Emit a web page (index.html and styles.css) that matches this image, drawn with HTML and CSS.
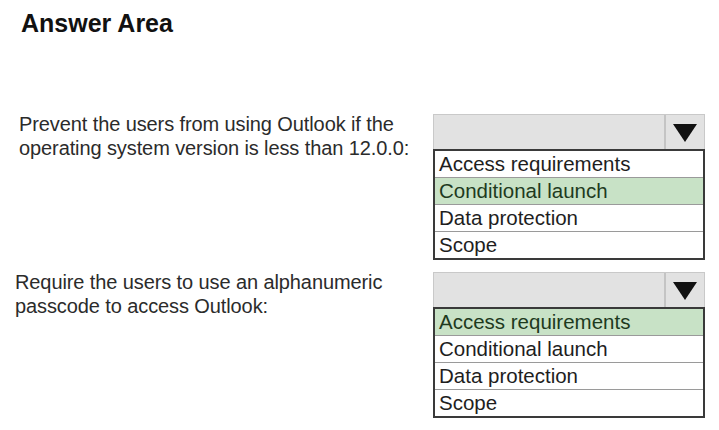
FILE: index.html
```html
<!DOCTYPE html>
<html lang="en">
<head>
    <meta charset="UTF-8">
    <title>Answer Area</title>
    <link rel="stylesheet" href="styles.css">
</head>
<body>
    <div class="answer-area">
        <h1>Answer Area</h1>

        <div class="question first">
            <p class="prompt">Prevent the users from using Outlook if the<br>operating system version is less than 12.0.0:</p>
            <div class="dropdown">
                <div class="dropdown-head">
                    <span class="dropdown-value"></span>
                    <span class="dropdown-arrow"><svg width="24" height="18" viewBox="0 0 24 18"><path d="M0 0 H24 L12 18 Z" fill="#111"/></svg></span>
                </div>
                <ul class="options">
                    <li>Access requirements</li>
                    <li class="picked">Conditional launch</li>
                    <li>Data protection</li>
                    <li>Scope</li>
                </ul>
            </div>
        </div>

        <div class="question second">
            <p class="prompt">Require the users to use an alphanumeric<br>passcode to access Outlook:</p>
            <div class="dropdown">
                <div class="dropdown-head">
                    <span class="dropdown-value"></span>
                    <span class="dropdown-arrow"><svg width="24" height="18" viewBox="0 0 24 18"><path d="M0 0 H24 L12 18 Z" fill="#111"/></svg></span>
                </div>
                <ul class="options">
                    <li class="picked">Access requirements</li>
                    <li>Conditional launch</li>
                    <li>Data protection</li>
                    <li>Scope</li>
                </ul>
            </div>
        </div>
    </div>
</body>
</html>
```
FILE: styles.css
```css
body {
    margin: 0;
    background: #fff;
    font-family: "Liberation Sans", Arial, sans-serif;
    color: #2a2a2a;
}
.answer-area {
    padding: 8px 0 0 0;
}
h1 {
    margin: 0 0 0 21px;
    font-size: 25px;
    line-height: 30px;
    font-weight: bold;
    color: #111;
}
.question {
    display: flex;
    align-items: flex-start;
}
.question.first {
    margin-top: 76px;
}
.question.second {
    margin-top: 12px;
}
.prompt {
    margin: 0;
    width: 414px;
    font-size: 20px;
    line-height: 24px;
    letter-spacing: -0.1px;
    color: #2b2b2b;
    white-space: nowrap;
}
.question.first .prompt {
    padding-left: 19px;
    margin-top: -2px;
}
.question.second .prompt {
    padding-left: 15px;
    width: 418px;
    margin-top: -2px;
}
.dropdown {
    width: 272px;
}
.dropdown-head {
    display: flex;
    height: 34px;
    background: #e2e2e2;
    border: 1px solid #c9c9c9;
    border-bottom: none;
}
.dropdown-value {
    flex: 1;
    border-right: 2px solid #c4c4c4;
}
.dropdown-arrow {
    width: 38px;
    display: flex;
    justify-content: center;
    align-items: center;
    padding-top: 2px;
}
.options {
    list-style: none;
    margin: 0;
    padding: 0;
    border: 2px solid #3a3a3a;
}
.options li {
    height: 26px;
    line-height: 26px;
    padding-left: 4px;
    font-size: 20.5px;
    color: #1e1e1e;
    border-top: 1px solid #9a9a9a;
    white-space: nowrap;
}
.options li:first-child {
    border-top: none;
}
.options li.picked {
    background: #c8e2c6;
    color: #1e3a1e;
}
```
